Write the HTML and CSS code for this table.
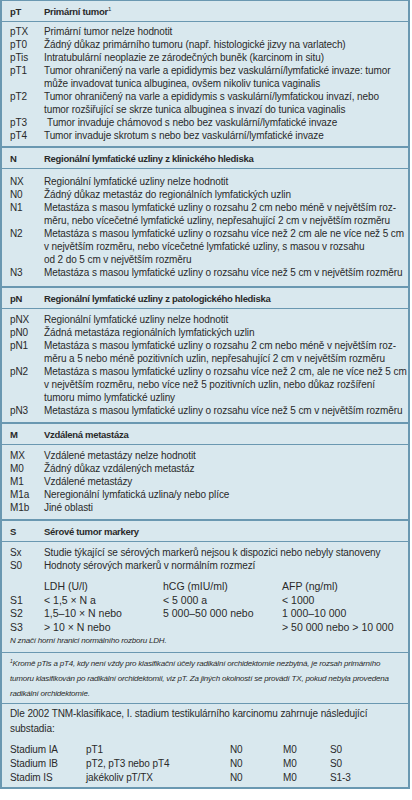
FILE: index.html
```html
<!DOCTYPE html>
<html lang="cs">
<head>
<meta charset="utf-8">
<title>TNM klasifikace</title>
<link rel="stylesheet" href="styles.css">
</head>
<body>
<div class="tnm">
  <section class="sec sec-t">
    <div class="head"><span class="code">pT</span><span>Primární tumor<sup>1</sup></span></div>
    <div class="body">
      <div class="row"><span class="code">pTX</span><span>Primární tumor nelze hodnotit</span></div>
      <div class="row"><span class="code">pT0</span><span>Žádný důkaz primárního tumoru (např. histologické jizvy na varlatech)</span></div>
      <div class="row"><span class="code">pTis</span><span>Intratubulární neoplazie ze zárodečných buněk (karcinom in situ)</span></div>
      <div class="row"><span class="code">pT1</span><span>Tumor ohraničený na varle a epididymis bez vaskulární/lymfatické invaze: tumor<br>může invadovat tunica albuginea, ovšem nikoliv tunica vaginalis</span></div>
      <div class="row"><span class="code">pT2</span><span>Tumor ohraničený na varle a epididymis s vaskulární/lymfatickou invazí, nebo<br>tumor rozšiřující se skrze tunica albuginea s invazí do tunica vaginalis</span></div>
      <div class="row"><span class="code">pT3</span><span class="ind">Tumor invaduje chámovod s nebo bez vaskulární/lymfatické invaze</span></div>
      <div class="row"><span class="code">pT4</span><span>Tumor invaduje skrotum s nebo bez vaskulární/lymfatické invaze</span></div>
    </div>
  </section>
  <section class="sec sec-n">
    <div class="head"><span class="code">N</span><span>Regionální lymfatické uzliny z klinického hlediska</span></div>
    <div class="body">
      <div class="row"><span class="code">NX</span><span>Regionální lymfatické uzliny nelze hodnotit</span></div>
      <div class="row"><span class="code">N0</span><span>Žádný důkaz metastáz do regionálních lymfatických uzlin</span></div>
      <div class="row"><span class="code">N1</span><span>Metastáza s masou lymfatické uzliny o rozsahu 2 cm nebo méně v největším roz-<br>měru, nebo vícečetné lymfatické uzliny, nepřesahující 2 cm v největším rozměru</span></div>
      <div class="row"><span class="code">N2</span><span>Metastáza s masou lymfatické uzliny o rozsahu více než 2 cm ale ne více než 5 cm<br>v největším rozměru, nebo vícečetné lymfatické uzliny, s masou v rozsahu<br>od 2 do 5 cm v největším rozměru</span></div>
      <div class="row"><span class="code">N3</span><span>Metastáza s masou lymfatické uzliny o rozsahu více než 5 cm v největším rozměru</span></div>
    </div>
  </section>
  <section class="sec">
    <div class="head"><span class="code">pN</span><span>Regionální lymfatické uzliny z patologického hlediska</span></div>
    <div class="body">
      <div class="row"><span class="code">pNX</span><span>Regionální lymfatické uzliny nelze hodnotit</span></div>
      <div class="row"><span class="code">pN0</span><span>Žádná metastáza regionálních lymfatických uzlin</span></div>
      <div class="row"><span class="code">pN1</span><span>Metastáza s masou lymfatické uzliny o rozsahu 2 cm nebo méně v největším roz-<br>měru a 5 nebo méně pozitivních uzlin, nepřesahující 2 cm v největším rozměru</span></div>
      <div class="row"><span class="code">pN2</span><span>Metastáza s masou lymfatické uzliny o rozsahu více než 2 cm, ale ne více než 5 cm<br>v největším rozměru, nebo více než 5 pozitivních uzlin, nebo důkaz rozšíření<br>tumoru mimo lymfatické uzliny</span></div>
      <div class="row"><span class="code">pN3</span><span>Metastáza s masou lymfatické uzliny o rozsahu více než 5 cm v největším rozměru</span></div>
    </div>
  </section>
  <section class="sec">
    <div class="head"><span class="code">M</span><span>Vzdálená metastáza</span></div>
    <div class="body">
      <div class="row"><span class="code">MX</span><span>Vzdálené metastázy nelze hodnotit</span></div>
      <div class="row"><span class="code">M0</span><span>Žádný důkaz vzdálených metastáz</span></div>
      <div class="row"><span class="code">M1</span><span>Vzdálené metastázy</span></div>
      <div class="row"><span class="code">M1a</span><span>Neregionální lymfatická uzlina/y nebo plíce</span></div>
      <div class="row"><span class="code">M1b</span><span>Jiné oblasti</span></div>
    </div>
  </section>
  <section class="sec">
    <div class="head"><span class="code">S</span><span>Sérové tumor markery</span></div>
    <div class="body">
      <div class="row"><span class="code">Sx</span><span>Studie týkající se sérových markerů nejsou k dispozici nebo nebyly stanoveny</span></div>
      <div class="row"><span class="code">S0</span><span>Hodnoty sérových markerů v normálním rozmezí</span></div>
      <div class="markers">
        <span></span><span>LDH (U/l)</span><span>hCG (mIU/ml)</span><span>AFP (ng/ml)</span>
        <span>S1</span><span>&lt; 1,5 × N a</span><span>&lt; 5 000 a</span><span>&lt; 1000</span>
        <span>S2</span><span>1,5–10 × N nebo</span><span>5 000–50 000 nebo</span><span>1 000–10 000</span>
        <span>S3</span><span>&gt; 10 × N nebo</span><span></span><span>&gt; 50 000 nebo &gt; 10 000</span>
      </div>
      <p class="small">N značí horní hranici normálního rozboru LDH.</p>
    </div>
  </section>
  <section class="sec thin">
    <p class="foot"><sup>1</sup>Kromě pTis a pT4, kdy není vždy pro klasifikační účely radikální orchidektomie nezbytná, je rozsah primárního<br>tumoru klasifikován po radikální orchidektomii, viz pT. Za jiných okolností se provádí TX, pokud nebyla provedena<br>radikální orchidektomie.</p>
  </section>
  <section class="sec thin stage">
    <p class="intro">Dle 2002 TNM-klasifikace, I. stadium testikulárního karcinomu zahrnuje následující<br>substadia:</p>
    <div class="stages">
      <span>Stadium IA</span><span>pT1</span><span>N0</span><span>M0</span><span>S0</span>
      <span>Stadium IB</span><span>pT2, pT3 nebo pT4</span><span>N0</span><span>M0</span><span>S0</span>
      <span>Stadim IS</span><span>jakékoliv pT/TX</span><span>N0</span><span>M0</span><span>S1-3</span>
    </div>
  </section>
</div>
</body>
</html>
```

FILE: styles.css
```css
* { box-sizing: border-box; }
html, body { margin: 0; padding: 0; background: #ffffff; }
body {
  font-family: "Liberation Sans", Arial, sans-serif;
  font-size: 10px;
  letter-spacing: -0.1px;
  color: #2a2a2a;
  line-height: 13px;
}
.tnm {
  width: 410px;
  background: #d9e8ee;
  border: 2px solid #6a98b1;
  border-top: 1px solid #6a98b1;
}
.sec + .sec { border-top: 2px solid #6a98b1; }
.sec.thin { border-top-width: 1px; }
.head {
  display: grid;
  grid-template-columns: 34px 1fr;
  padding: 4px 8px 3px;
  font-weight: bold;
  font-size: 9.5px;
  letter-spacing: -0.3px;
  border-bottom: 1px solid #6a98b1;
  white-space: nowrap;
}
.head sup { font-size: 6px; line-height: 0; vertical-align: 4px; font-weight: normal; }
.body { padding: 4px 8px 5px; }
.sec-t .body { padding: 3px 8px 4px; }
.sec-n .body { padding: 6px 8px 7px; }
.row {
  display: grid;
  grid-template-columns: 34px 1fr;
  white-space: nowrap;
}
.ind { padding-left: 3px; }
.markers {
  display: grid;
  grid-template-columns: 34px 119px 119px 1fr;
  margin-top: 8px;
  font-size: 10.5px;
  letter-spacing: 0;
  line-height: 13.5px;
  white-space: nowrap;
}
.small {
  margin: 0;
  font-size: 8px;
  font-style: italic;
  letter-spacing: -0.2px;
  line-height: 13px;
}
.foot {
  margin: 0;
  padding: 3px 8px 2px;
  font-size: 8px;
  font-style: italic;
  letter-spacing: -0.2px;
  line-height: 15px;
  white-space: nowrap;
}
.foot sup { font-size: 5px; line-height: 0; vertical-align: 3px; }
.stage { padding: 2px 8px 2px; }
.intro { margin: 0 0 7px; line-height: 15px; white-space: nowrap; }
.stages {
  display: grid;
  grid-template-columns: 76px 144px 53px 47px 1fr;
  line-height: 14px;
  white-space: nowrap;
}
```
